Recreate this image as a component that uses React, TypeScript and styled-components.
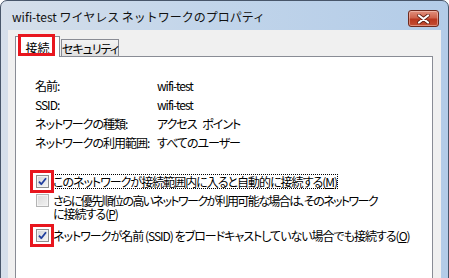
import styled, { createGlobalStyle } from "styled-components";

const GlobalStyle = createGlobalStyle`
  html, body {
    margin: 0;
    padding: 0;
    overflow: hidden;
    background: #ffffff;
  }
  body {
    font-family: "Noto Sans CJK JP", "Noto Sans", sans-serif;
    font-size: 12px;
    color: #000;
  }
`;

const infoRows = [
  { label: "名前:", value: "wifi-test" },
  { label: "SSID:", value: "wifi-test" },
  { label: "ネットワークの種類:", value: "アクセス ポイント" },
  { label: "ネットワークの利用範囲:", value: "すべてのユーザー" },
];

function CheckMark() {
  return (
    <svg width="9" height="9" viewBox="0 0 9 9">
      <path
        d="M1 4.6 L3.3 7.2 L8 1.2"
        fill="none"
        stroke="#213f9e"
        strokeWidth="1.8"
        strokeLinejoin="round"
      />
    </svg>
  );
}

function CloseGlyph() {
  return (
    <svg width="13" height="10" viewBox="0 0 13 10">
      <path
        d="M2 1.5 L11 8.5 M11 1.5 L2 8.5"
        stroke="#5a1d12"
        strokeWidth="3.6"
        strokeLinecap="round"
      />
      <path
        d="M2 1.5 L11 8.5 M11 1.5 L2 8.5"
        stroke="#ffffff"
        strokeWidth="2.2"
        strokeLinecap="round"
      />
    </svg>
  );
}

export default function App() {
  return (
    <>
      <GlobalStyle />
      <Window>
        <TitleBar>
          <Title>wifi-test ワイヤレス ネットワークのプロパティ</Title>
          <CloseButton>
            <CloseGlyph />
          </CloseButton>
        </TitleBar>
        <Client>
          <TabStrip>
            <Tab $active>
              接続
              <Highlight $left={2} $top={-3} $width={37} $height={22} />
            </Tab>
            <Tab>セキュリティ</Tab>
          </TabStrip>
          <Panel>
            <InfoGrid>
              {infoRows.map((row) => (
                <InfoRow key={row.label}>
                  <span>{row.label}</span>
                  <span>{row.value}</span>
                </InfoRow>
              ))}
            </InfoGrid>
            <CheckList>
              <CheckRow>
                <Box $checked>
                  <CheckMark />
                  <Highlight $left={-7} $top={-6} $width={24} $height={23} />
                </Box>
                <CheckText $focused>
                  このネットワークが接続範囲内に入ると自動的に接続する(<u>M</u>)
                </CheckText>
              </CheckRow>
              <CheckRow $gap={6}>
                <Box $disabled />
                <CheckText $spacing={-1.6}>
                  さらに優先順位の高いネットワークが利用可能な場合は、そのネットワーク
                  <br />
                  <Normal>
                    に接続する(<u>P</u>)
                  </Normal>
                </CheckText>
              </CheckRow>
              <CheckRow $gap={9}>
                <Box $checked>
                  <CheckMark />
                  <Highlight $left={-7} $top={-6} $width={24} $height={23} />
                </Box>
                <CheckText>
                  ネットワークが名前 (SSID) をブロードキャストしていない場合でも接続する(<u>O</u>)
                </CheckText>
              </CheckRow>
            </CheckList>
          </Panel>
        </Client>
      </Window>
    </>
  );
}

const Window = styled.div`
  box-sizing: border-box;
  width: 449px;
  height: 330px;
  display: flex;
  flex-direction: column;
  padding: 0 7px;
  border: 1px solid #48566a;
  border-radius: 7px 7px 0 0;
  background: linear-gradient(to right, #d6dfea 0%, #c2d5ea 45%, #b3cce8 100%);
`;

const TitleBar = styled.div`
  height: 29px;
  display: flex;
  justify-content: space-between;
  align-items: flex-start;
  padding-left: 4px;
`;

const Title = styled.div`
  font-size: 12px;
  line-height: 14px;
  margin-top: 9px;
  white-space: nowrap;
  color: #111;
`;

const CloseButton = styled.div`
  box-sizing: border-box;
  width: 31px;
  height: 17px;
  margin-top: 9px;
  margin-right: 2px;
  display: flex;
  align-items: center;
  justify-content: center;
  border: 1px solid #6e2a1e;
  border-radius: 3px;
  background: linear-gradient(to bottom, #e0907d 0%, #cf634c 45%, #b9371f 55%, #c44f34 100%);
  box-shadow: inset 0 0 0 1px rgba(255, 220, 210, 0.45);
`;

const Client = styled.div`
  flex: 1;
  display: flex;
  flex-direction: column;
  background: #f0f0f0;
  padding: 6px 8px 0 7px;
`;

const TabStrip = styled.div`
  display: flex;
  align-items: flex-end;
  height: 20px;
  position: relative;
  z-index: 1;
`;

const Tab = styled.div<{ $active?: boolean }>`
  position: relative;
  box-sizing: border-box;
  display: flex;
  align-items: center;
  justify-content: center;
  border: 1px solid #898c95;
  border-bottom: none;
  font-size: 12px;
  font-feature-settings: "palt";
  letter-spacing: ${(p) => (p.$active ? "0" : "-1px")};
  white-space: nowrap;
  ${(p) =>
    p.$active
      ? `
    width: 45px;
    height: 21px;
    margin-bottom: -1px;
    background: #ffffff;
    padding-top: 1px;
  `
      : `
    width: 58px;
    height: 17px;
    margin-left: 1px;
    background: linear-gradient(to bottom, #f3f3f3, #e0e0e0);
  `}
`;

const Highlight = styled.div<{ $left: number; $top: number; $width: number; $height: number }>`
  position: absolute;
  box-sizing: border-box;
  left: ${(p) => p.$left}px;
  top: ${(p) => p.$top}px;
  width: ${(p) => p.$width}px;
  height: ${(p) => p.$height}px;
  border: 3px solid #e8161e;
  pointer-events: none;
`;

const Panel = styled.div`
  flex: 1;
  background: #ffffff;
  border: 1px solid #898c95;
  border-bottom: none;
  padding: 19px 0 0 19px;
`;

const InfoGrid = styled.div`
  display: flex;
  flex-direction: column;
  font-feature-settings: "palt";
  letter-spacing: -1px;
  word-spacing: 4px;
`;

const InfoRow = styled.div`
  display: grid;
  grid-template-columns: 122px auto;
  height: 19px;
  line-height: 19px;
  white-space: nowrap;
`;

const CheckList = styled.div`
  display: flex;
  flex-direction: column;
  margin-top: 23px;
  padding-left: 1px;
`;

const CheckRow = styled.div<{ $gap?: number }>`
  display: flex;
  align-items: flex-start;
  gap: 4px;
  margin-top: ${(p) => p.$gap ?? 0}px;
`;

const Box = styled.div<{ $checked?: boolean; $disabled?: boolean }>`
  position: relative;
  box-sizing: border-box;
  flex: none;
  width: 13px;
  height: 13px;
  display: flex;
  align-items: center;
  justify-content: center;
  border: 1px solid ${(p) => (p.$disabled ? "#b4b4b4" : "#8e8f8f")};
  background: ${(p) =>
    p.$disabled
      ? "linear-gradient(135deg, #dadada, #f2f2f2)"
      : "linear-gradient(135deg, #cfd3d8, #f7f7f7)"};
  box-shadow: inset 0 0 0 1px ${(p) => (p.$disabled ? "#f4f4f4" : "#f2f2f2")};
`;

const CheckText = styled.span<{ $focused?: boolean; $spacing?: number }>`
  font-size: 12px;
  line-height: 13px;
  font-feature-settings: "palt";
  letter-spacing: ${(p) => p.$spacing ?? -1}px;
  white-space: nowrap;
  outline: ${(p) => (p.$focused ? "1px dotted #000" : "none")};
  u {
    text-underline-offset: 1px;
  }
`;

const Normal = styled.span`
  letter-spacing: -1px;
`;
